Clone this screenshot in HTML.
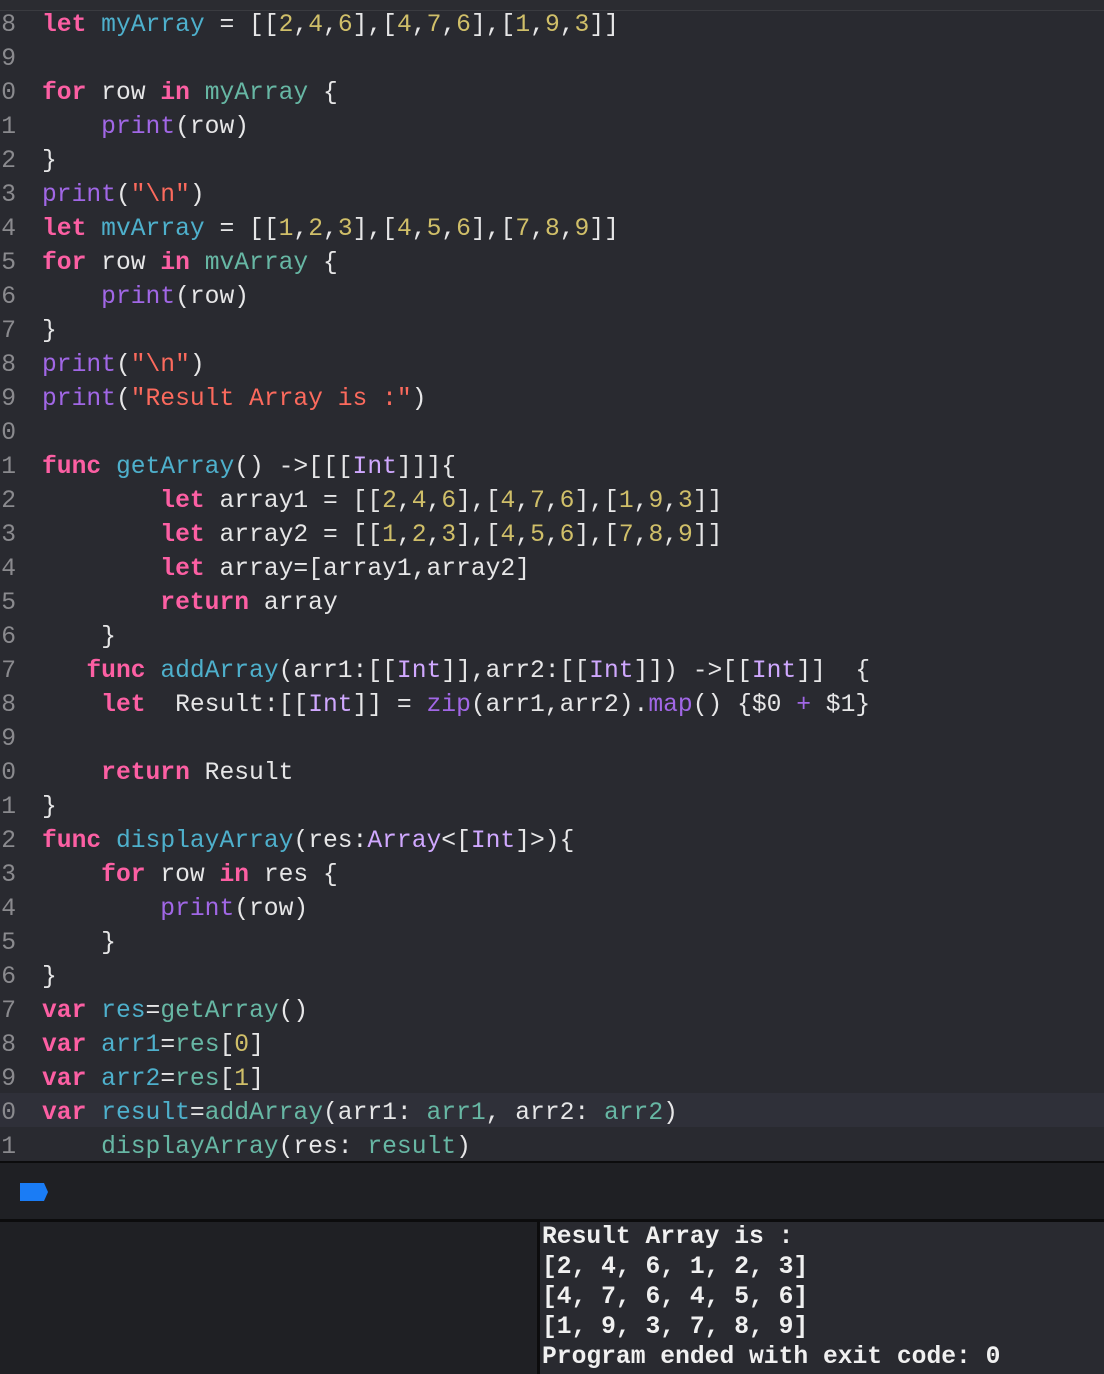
<!DOCTYPE html>
<html><head><meta charset="utf-8"><style>
body{margin:0;width:1104px;height:1374px;background:#292a30;overflow:hidden;position:relative;font-family:"Liberation Mono",monospace;}
.top{position:absolute;left:0;top:0;width:1104px;height:10px;background:#2b2c31;border-bottom:1px solid #3a3b40;}
.code{position:absolute;left:0;top:5px;width:1104px;}
.l{position:relative;height:34px;line-height:34px;font-size:24.65px;color:#e6e6e7;white-space:pre;}
.n{position:absolute;right:1088px;top:3px;color:#8a8a8e;text-align:right;}
.t{position:absolute;left:42px;top:3px;}
.hl{background:#2f3039;}
.k{color:#fc5fa3;font-weight:bold}
.d{color:#4eb0cc}
.r{color:#67b7a4}
.p{color:#a167e6}
.s{color:#fc6a5d}
.y{color:#d0bf69}
.i{color:#d0a8ff}
.sep{position:absolute;left:0;width:1104px;height:2px;background:#0c0c0d;}
.dbg{position:absolute;left:0;top:1163px;width:1104px;height:57px;background:#1f2024;}
.con{position:absolute;left:0;top:1222px;width:1104px;height:152px;background:#1f2024;}
.out{position:absolute;left:537px;top:1222px;width:567px;height:152px;background:#292a30;border-left:3px solid #0c0c0d;box-sizing:border-box;}
.out pre{margin:0;padding:0 0 0 2px;font-family:"Liberation Mono",monospace;font-weight:bold;font-size:24.65px;line-height:30px;color:#f0f0f0;}
</style></head><body>
<div class="top"></div>
<div class="code">
<div class="l"><span class="n">8</span><span class="t"><span class="k">let</span> <span class="d">myArray</span> = [[<span class="y">2</span>,<span class="y">4</span>,<span class="y">6</span>],[<span class="y">4</span>,<span class="y">7</span>,<span class="y">6</span>],[<span class="y">1</span>,<span class="y">9</span>,<span class="y">3</span>]]</span></div>
<div class="l"><span class="n">9</span></div>
<div class="l"><span class="n">10</span><span class="t"><span class="k">for</span> row <span class="k">in</span> <span class="r">myArray</span> {</span></div>
<div class="l"><span class="n">11</span><span class="t">    <span class="p">print</span>(row)</span></div>
<div class="l"><span class="n">12</span><span class="t">}</span></div>
<div class="l"><span class="n">13</span><span class="t"><span class="p">print</span>(<span class="s">"\n"</span>)</span></div>
<div class="l"><span class="n">14</span><span class="t"><span class="k">let</span> <span class="d">mvArray</span> = [[<span class="y">1</span>,<span class="y">2</span>,<span class="y">3</span>],[<span class="y">4</span>,<span class="y">5</span>,<span class="y">6</span>],[<span class="y">7</span>,<span class="y">8</span>,<span class="y">9</span>]]</span></div>
<div class="l"><span class="n">15</span><span class="t"><span class="k">for</span> row <span class="k">in</span> <span class="r">mvArray</span> {</span></div>
<div class="l"><span class="n">16</span><span class="t">    <span class="p">print</span>(row)</span></div>
<div class="l"><span class="n">17</span><span class="t">}</span></div>
<div class="l"><span class="n">18</span><span class="t"><span class="p">print</span>(<span class="s">"\n"</span>)</span></div>
<div class="l"><span class="n">19</span><span class="t"><span class="p">print</span>(<span class="s">"Result Array is :"</span>)</span></div>
<div class="l"><span class="n">20</span></div>
<div class="l"><span class="n">21</span><span class="t"><span class="k">func</span> <span class="d">getArray</span>() -&gt;[[[<span class="i">Int</span>]]]{</span></div>
<div class="l"><span class="n">22</span><span class="t">        <span class="k">let</span> array1 = [[<span class="y">2</span>,<span class="y">4</span>,<span class="y">6</span>],[<span class="y">4</span>,<span class="y">7</span>,<span class="y">6</span>],[<span class="y">1</span>,<span class="y">9</span>,<span class="y">3</span>]]</span></div>
<div class="l"><span class="n">23</span><span class="t">        <span class="k">let</span> array2 = [[<span class="y">1</span>,<span class="y">2</span>,<span class="y">3</span>],[<span class="y">4</span>,<span class="y">5</span>,<span class="y">6</span>],[<span class="y">7</span>,<span class="y">8</span>,<span class="y">9</span>]]</span></div>
<div class="l"><span class="n">24</span><span class="t">        <span class="k">let</span> array=[array1,array2]</span></div>
<div class="l"><span class="n">25</span><span class="t">        <span class="k">return</span> array</span></div>
<div class="l"><span class="n">26</span><span class="t">    }</span></div>
<div class="l"><span class="n">27</span><span class="t">   <span class="k">func</span> <span class="d">addArray</span>(arr1:[[<span class="i">Int</span>]],arr2:[[<span class="i">Int</span>]]) -&gt;[[<span class="i">Int</span>]]  {</span></div>
<div class="l"><span class="n">28</span><span class="t">    <span class="k">let</span>  Result:[[<span class="i">Int</span>]] = <span class="p">zip</span>(arr1,arr2).<span class="p">map</span>() {$0 <span class="p">+</span> $1}</span></div>
<div class="l"><span class="n">29</span></div>
<div class="l"><span class="n">30</span><span class="t">    <span class="k">return</span> Result</span></div>
<div class="l"><span class="n">31</span><span class="t">}</span></div>
<div class="l"><span class="n">32</span><span class="t"><span class="k">func</span> <span class="d">displayArray</span>(res:<span class="i">Array</span>&lt;[<span class="i">Int</span>]&gt;){</span></div>
<div class="l"><span class="n">33</span><span class="t">    <span class="k">for</span> row <span class="k">in</span> res {</span></div>
<div class="l"><span class="n">34</span><span class="t">        <span class="p">print</span>(row)</span></div>
<div class="l"><span class="n">35</span><span class="t">    }</span></div>
<div class="l"><span class="n">36</span><span class="t">}</span></div>
<div class="l"><span class="n">37</span><span class="t"><span class="k">var</span> <span class="d">res</span>=<span class="r">getArray</span>()</span></div>
<div class="l"><span class="n">38</span><span class="t"><span class="k">var</span> <span class="d">arr1</span>=<span class="r">res</span>[<span class="y">0</span>]</span></div>
<div class="l"><span class="n">39</span><span class="t"><span class="k">var</span> <span class="d">arr2</span>=<span class="r">res</span>[<span class="y">1</span>]</span></div>
<div class="l hl"><span class="n">40</span><span class="t"><span class="k">var</span> <span class="d">result</span>=<span class="r">addArray</span>(arr1: <span class="r">arr1</span>, arr2: <span class="r">arr2</span>)</span></div>
<div class="l"><span class="n">41</span><span class="t">    <span class="r">displayArray</span>(res: <span class="r">result</span>)</span></div>
</div>
<div class="sep" style="top:1161px"></div>
<div class="dbg"><svg style="position:absolute;left:20px;top:20px" width="30" height="19"><path d="M0 0H24L28 9L24 18H0Z" fill="#1a7cf5"/></svg></div>
<div class="sep" style="top:1219px;height:3px"></div>
<div class="con"></div>
<div class="out"><pre>Result Array is :
[2, 4, 6, 1, 2, 3]
[4, 7, 6, 4, 5, 6]
[1, 9, 3, 7, 8, 9]
Program ended with exit code: 0</pre></div>
</body></html>
